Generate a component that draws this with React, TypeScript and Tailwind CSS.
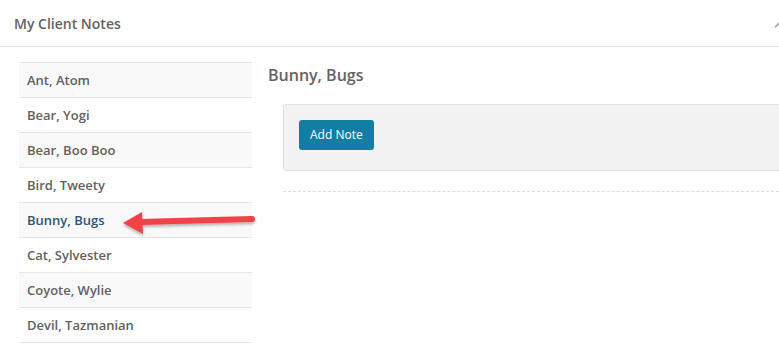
import { ChevronUp } from "lucide-react";

const clients = [
  "Ant, Atom",
  "Bear, Yogi",
  "Bear, Boo Boo",
  "Bird, Tweety",
  "Bunny, Bugs",
  "Cat, Sylvester",
  "Coyote, Wylie",
  "Devil, Tazmanian",
];

export default function App() {
  const selected = "Bunny, Bugs";

  return (
    <div
      className="relative w-[779px] h-[345px] overflow-hidden bg-white"
      style={{ fontFamily: '"Open Sans", sans-serif' }}
    >
      {/* Panel header */}
      <div className="flex items-center justify-between h-[47px] border-b border-[#e5e5e5] pl-[14px]">
        <span className="text-[14px] font-semibold text-[#636363]">My Client Notes</span>
        <ChevronUp className="w-[14px] h-[14px] text-[#a0a0a0] mr-[-7px] mt-[4px]" strokeWidth={3} />
      </div>

      <div className="flex pt-[15px] pl-[19px] gap-[16px]">
        {/* Client list */}
        <div className="w-[233px] shrink-0 flex flex-col border-t border-[#e6e6e6]">
          {clients.map((name, i) => (
            <div
              key={name}
              className={`h-[35px] flex items-center pl-[8px] pt-[2px] border-b border-[#e6e6e6] text-[13px] font-semibold ${
                i % 2 === 0 ? "bg-[#f9f9f9]" : "bg-white"
              } ${name === selected ? "text-[#2d5477]" : "text-[#616161]"}`}
            >
              {name}
            </div>
          ))}
        </div>

        {/* Notes area */}
        <div className="flex-1 min-w-0">
          <h2 className="text-[16px] font-semibold text-[#636363] h-[27px] leading-[27px]">{selected}</h2>
          <div className="ml-[15px] mt-[15px] mr-[-10px]">
            <div className="h-[67px] bg-[#f2f2f2] border border-[#e0e0e0] rounded-[3px] pt-[15px] pl-[15px]">
              <button className="h-[30px] px-[11px] rounded-[3px] bg-[#137ea3] text-white text-[12px]">
                Add Note
              </button>
            </div>
            <div className="mt-[20px] border-t border-dashed border-[#dcdcdc]" />
          </div>
        </div>
      </div>

      {/* Callout arrow */}
      <svg className="absolute left-[118px] top-[207px]" width="142" height="34" viewBox="0 0 142 34">
        <defs>
          <filter id="sh" x="-10%" y="-50%" width="120%" height="200%">
            <feDropShadow dx="0" dy="2" stdDeviation="1.5" floodColor="#000" floodOpacity="0.3" />
          </filter>
        </defs>
        <g filter="url(#sh)">
          <line x1="22" y1="15" x2="134" y2="12" stroke="#f0434a" strokeWidth="6" strokeLinecap="round" />
          <polygon points="5,16 24,5 25,27" fill="#f0434a" />
        </g>
      </svg>
    </div>
  );
}
